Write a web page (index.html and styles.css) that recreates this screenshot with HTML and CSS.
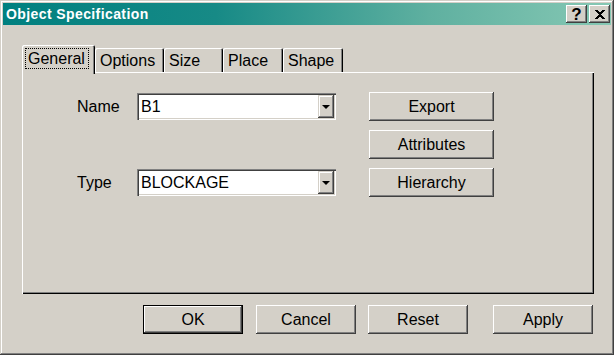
FILE: index.html
```html
<!DOCTYPE html>
<html lang="en">

<head>
    <meta charset="UTF-8">
    <title>Object Specification</title>
    <link rel="stylesheet" href="styles.css">
</head>

<body>
    <!-- dialog window -->
    <div class="window">
        <div class="titlebar">
            <span class="title">Object Specification</span>
            <div class="caption-buttons">
                <div class="cap-btn help">?</div>
                <div class="cap-btn close">
                    <svg width="10" height="9" viewBox="0 0 10 9">
                        <path d="M0 0h3v1h1v1h2v-1h1v-1h3v1h-1v1h-1v1h-1v1h-1v1h1v1h1v1h1v1h1v1h-3v-1h-1v-1h-2v1h-1v1h-3v-1h1v-1h1v-1h1v-1h1v-1h-1v-1h-1v-1h-1v-1h-1z" fill="#000"/>
                    </svg>
                </div>
            </div>
        </div>

        <div class="content">
            <!-- tabs -->
            <div class="tabs">
                <div class="tab tab-general selected"><span class="focus">General</span></div>
                <div class="tab tab-options">Options</div>
                <div class="tab tab-size">Size</div>
                <div class="tab tab-place">Place</div>
                <div class="tab tab-shape">Shape</div>
            </div>

            <!-- tab page -->
            <div class="panel">
                <div class="form">
                    <label class="label row1">Name</label>
                    <div class="combo row1">
                        <span class="combo-text">B1</span>
                        <span class="combo-arrow"><span class="tri"></span></span>
                    </div>
                    <button class="btn side row1">Export</button>
                    <button class="btn side row2">Attributes</button>
                    <label class="label row3">Type</label>
                    <div class="combo row3">
                        <span class="combo-text">BLOCKAGE</span>
                        <span class="combo-arrow"><span class="tri"></span></span>
                    </div>
                    <button class="btn side row3">Hierarchy</button>
                </div>
            </div>

            <!-- dialog buttons -->
            <div class="actions">
                <button class="btn action default">OK</button>
                <button class="btn action">Cancel</button>
                <button class="btn action reset">Reset</button>
                <button class="btn action apply">Apply</button>
            </div>
        </div>
    </div>
</body>

</html>
```

FILE: styles.css
```css
* {
    box-sizing: border-box;
}

body {
    margin: 0;
    background-color: #d4d0c8;
    font-family: "Liberation Sans", Arial, sans-serif;
}

.window {
    width: 614px;
    height: 355px;
    padding: 3px;
    background-color: #d4d0c8;
    box-shadow: inset -1px -1px 0 #404040, inset 1px 1px 0 #d4d0c8, inset -2px -2px 0 #808080, inset 2px 2px 0 #ffffff;
}

.titlebar {
    height: 22px;
    display: flex;
    align-items: center;
    justify-content: space-between;
    padding: 0 1px 0 3px;
    background: linear-gradient(to right, #008080 0%, #178a86 35%, #5fb0a0 70%, #86c8b4 100%);
}

.title {
    color: #ffffff;
    font-weight: bold;
    font-size: 14px;
    letter-spacing: 0.4px;
}

.caption-buttons {
    display: flex;
    gap: 2px;
}

.cap-btn {
    width: 21px;
    height: 18px;
    background-color: #d4d0c8;
    box-shadow: inset -1px -1px 0 #404040, inset 1px 1px 0 #ffffff, inset -2px -2px 0 #808080;
    display: flex;
    align-items: center;
    justify-content: center;
}

.help {
    font-weight: bold;
    font-size: 17px;
    line-height: 1;
    color: #000;
    padding-top: 1px;
}

.content {
    padding: 20px 17px 0 19px;
}

.tabs {
    display: flex;
    align-items: flex-end;
    height: 27px;
}

.tab {
    height: 24px;
    font-size: 16px;
    padding: 4px 0 0 5px;
    background-color: #d4d0c8;
    border-radius: 2px 2px 0 0;
    box-shadow: inset 1px 1px 0 #ffffff, inset -1px 0 0 #000000, inset -2px 0 0 #808080;
}

.tab.selected {
    padding: 3px 0 0 3px;
    position: relative;
    z-index: 1;
    margin-bottom: -2px;
    height: 29px;
}

.focus {
    display: inline-block;
    padding: 1px 4px 1px 3px;
    outline: 1px dotted #000;
    outline-offset: -1px;
    line-height: 19px;
}

.tab-general { width: 73px; }
.tab-options { width: 69px; }
.tab-size { width: 59px; }
.tab-place { width: 60px; }
.tab-shape { width: 60px; }

.panel {
    width: 572px;
    height: 222px;
    padding: 20px 0 0 55px;
    box-shadow: inset 1px 1px 0 #ffffff, inset -1px -1px 0 #000000, inset -2px -2px 0 #808080;
}

.form {
    display: grid;
    grid-template-columns: 60px 199px 158px;
    grid-template-rows: 29px 29px 29px;
    row-gap: 9px;
    align-items: center;
}

.label {
    font-size: 16px;
    grid-column: 1;
}

.row1 { grid-row: 1; }
.row2 { grid-row: 2; }
.row3 { grid-row: 3; }

.combo {
    grid-column: 2;
    height: 27px;
    background-color: #ffffff;
    display: flex;
    align-items: center;
    justify-content: space-between;
    padding: 2px;
    box-shadow: inset 1px 1px 0 #808080, inset 2px 2px 0 #404040, inset -1px -1px 0 #ffffff, inset -2px -2px 0 #d4d0c8;
}

.combo-text {
    font-size: 16px;
    padding-left: 2px;
}

.combo-arrow {
    width: 16px;
    height: 23px;
    background-color: #d4d0c8;
    box-shadow: inset -1px -1px 0 #404040, inset 1px 1px 0 #d4d0c8, inset -2px -2px 0 #808080, inset 2px 2px 0 #ffffff;
    display: flex;
    align-items: center;
    justify-content: center;
}

.tri {
    width: 0;
    height: 0;
    border-left: 4px solid transparent;
    border-right: 4px solid transparent;
    border-top: 4px solid #000;
}

.btn {
    font-family: "Liberation Sans", Arial, sans-serif;
    font-size: 16px;
    color: #000;
    background-color: #d4d0c8;
    border: none;
    padding: 0;
    height: 29px;
    box-shadow: inset -1px -1px 0 #404040, inset 1px 1px 0 #ffffff, inset -2px -2px 0 #808080;
}

.side {
    grid-column: 3;
    width: 125px;
    margin-left: 33px;
}

.actions {
    display: flex;
    padding: 11px 0 0 121px;
    gap: 13px;
}

.action {
    width: 100px;
}

.reset {
    margin-left: -1px;
}

.apply {
    margin-left: 12px;
}

.default {
    box-shadow: inset 0 0 0 1px #000000, inset -2px -2px 0 #404040, inset 2px 2px 0 #ffffff, inset -3px -3px 0 #808080;
}
```
